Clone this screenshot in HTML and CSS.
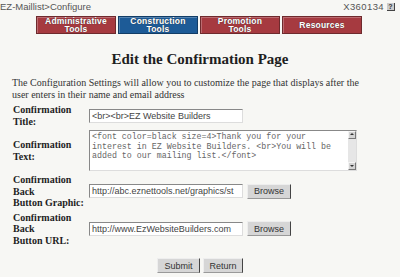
FILE: index.html
```html
<!DOCTYPE html>
<html lang="en">
<head>
  <meta charset="UTF-8" />
  <title>EZ-Maillist &gt; Configure</title>
  <link rel="stylesheet" href="styles.css">
</head>
<body>
  <div class="topbar">
    <span class="crumb">EZ-Maillist&gt;Configure</span>
    <span class="account">X360134 <span class="help">?</span></span>
  </div>

  <nav class="tabs">
    <a class="tab">Administrative<br>Tools</a>
    <a class="tab current">Construction<br>Tools</a>
    <a class="tab">Promotion<br>Tools</a>
    <a class="tab">Resources</a>
  </nav>

  <h1>Edit the Confirmation Page</h1>

  <p class="intro">The Configuration Settings will allow you to customize the page that displays after the user enters in their name and email address</p>

  <form class="config">
    <label>Confirmation<br>Title:</label>
    <div class="field">
      <input type="text" class="text" value="<br><br>EZ Website Builders">
    </div>

    <label>Confirmation<br>Text:</label>
    <div class="field">
      <div class="textbox">
        <textarea>&lt;font color=black size=4&gt;Thank you for your interest in EZ Website Builders. &lt;br&gt;You will be added to our mailing list.&lt;/font&gt;</textarea>
        <div class="scroll">
          <span class="arrow up"></span>
          <span class="track"></span>
          <span class="arrow down"></span>
        </div>
      </div>
    </div>

    <label>Confirmation<br>Back<br>Button Graphic:</label>
    <div class="field">
      <input type="text" class="text" value="http://abc.eznettools.net/graphics/st">
      <button type="button" class="btn browse">Browse</button>
    </div>

    <label>Confirmation<br>Back<br>Button URL:</label>
    <div class="field">
      <input type="text" class="text" value="http://www.EzWebsiteBuilders.com">
      <button type="button" class="btn browse">Browse</button>
    </div>
  </form>

  <div class="actions">
    <button type="button" class="btn submit">Submit</button>
    <button type="button" class="btn back">Return</button>
  </div>
</body>
</html>
```

FILE: styles.css
```css
:root {
  --red: #a63a40;
  --blue: #1d5b97;
  --text: #222;
}

body {
  margin: 0;
  background: #f7f7f4;
  font-family: 'Liberation Serif', serif;
  color: var(--text);
  overflow: hidden;
}

.topbar {
  display: flex;
  justify-content: space-between;
  align-items: center;
  height: 13px;
  padding: 0 5px 0 0;
  font-family: 'Liberation Sans', sans-serif;
  font-size: 9.5px;
  color: #555;
}

.account {
  display: flex;
  align-items: center;
  gap: 3px;
  letter-spacing: 0.4px;
}

.help {
  display: inline-block;
  width: 7px;
  height: 7px;
  line-height: 7px;
  font-size: 7px;
  font-weight: bold;
  text-align: center;
  letter-spacing: 0;
  background: #ccc;
  color: #333;
  border-right: 1px solid #444;
  border-bottom: 1px solid #444;
}

.tabs {
  display: flex;
  gap: 2px;
  margin: 3px 0 0 36px;
}

.tab {
  width: 80px;
  height: 18px;
  box-sizing: border-box;
  display: flex;
  align-items: center;
  justify-content: center;
  text-align: center;
  font-family: 'Liberation Sans', sans-serif;
  font-size: 8.5px;
  line-height: 8.5px;
  font-weight: bold;
  letter-spacing: 0.2px;
  color: #fff;
  text-shadow: 0 0 1px #333;
  background: var(--red);
  border: 1px solid #6e2a2d;
  box-shadow: inset 1px 1px 0 rgba(255,255,255,0.25);
}

.tab.current {
  background: var(--blue);
  border-color: #123d66;
}

h1 {
  margin: 16px 0 9px;
  font-size: 15px;
  line-height: 18px;
  text-align: center;
  color: #1e1e1e;
}

.intro {
  width: 358px;
  margin: 0 12px;
  font-size: 10px;
  line-height: 12px;
  color: #333;
}

.config {
  display: grid;
  grid-template-columns: 76px auto;
  row-gap: 3px;
  align-items: center;
  padding: 3px 0 0 13px;
}

.config label {
  font-weight: bold;
  font-size: 10px;
  line-height: 11.5px;
  color: #1e1e1e;
}

.field {
  display: flex;
  align-items: center;
  gap: 4px;
}

.text {
  width: 154px;
  height: 14px;
  box-sizing: border-box;
  margin: 0;
  padding: 0 2px;
  background: #fff;
  border: 1px solid;
  border-color: #888 #ddd #ddd #888;
  font-family: 'Liberation Sans', sans-serif;
  font-size: 9px;
  color: #444;
}

.textbox {
  display: flex;
  width: 268px;
  height: 41px;
  box-sizing: border-box;
  background: #fff;
  border: 1px solid;
  border-color: #888 #ddd #ddd #888;
}

.textbox textarea {
  flex: 1;
  margin: 0;
  padding: 1px 2px;
  border: none;
  resize: none;
  overflow: hidden;
  background: transparent;
  font-family: 'Liberation Mono', monospace;
  font-size: 8.3px;
  line-height: 9.5px;
  color: #666;
}

.scroll {
  display: flex;
  flex-direction: column;
  width: 8px;
  background: #e6e6e6;
}

.track {
  flex: 1;
}

.arrow {
  height: 8px;
  box-sizing: border-box;
  background: #d4d4d4;
  border: 1px solid;
  border-color: #f4f4f4 #777 #777 #f4f4f4;
  position: relative;
}

.arrow::after {
  content: '';
  position: absolute;
  left: 1px;
  border-left: 2px solid transparent;
  border-right: 2px solid transparent;
}

.arrow.up::after {
  top: 1px;
  border-bottom: 2px solid #333;
}

.arrow.down::after {
  top: 2px;
  border-top: 2px solid #333;
}

.btn {
  height: 15px;
  margin: 0;
  padding: 0;
  box-sizing: border-box;
  background: #d6d6d6;
  border: 1px solid;
  border-color: #eee #444 #999 #eee;
  font-family: 'Liberation Sans', sans-serif;
  font-size: 9px;
  color: #333;
}

.browse {
  width: 44px;
}

.actions {
  display: flex;
  justify-content: center;
  gap: 3px;
  margin-top: 12px;
}

.submit {
  width: 43px;
}

.back {
  width: 40px;
}
```
